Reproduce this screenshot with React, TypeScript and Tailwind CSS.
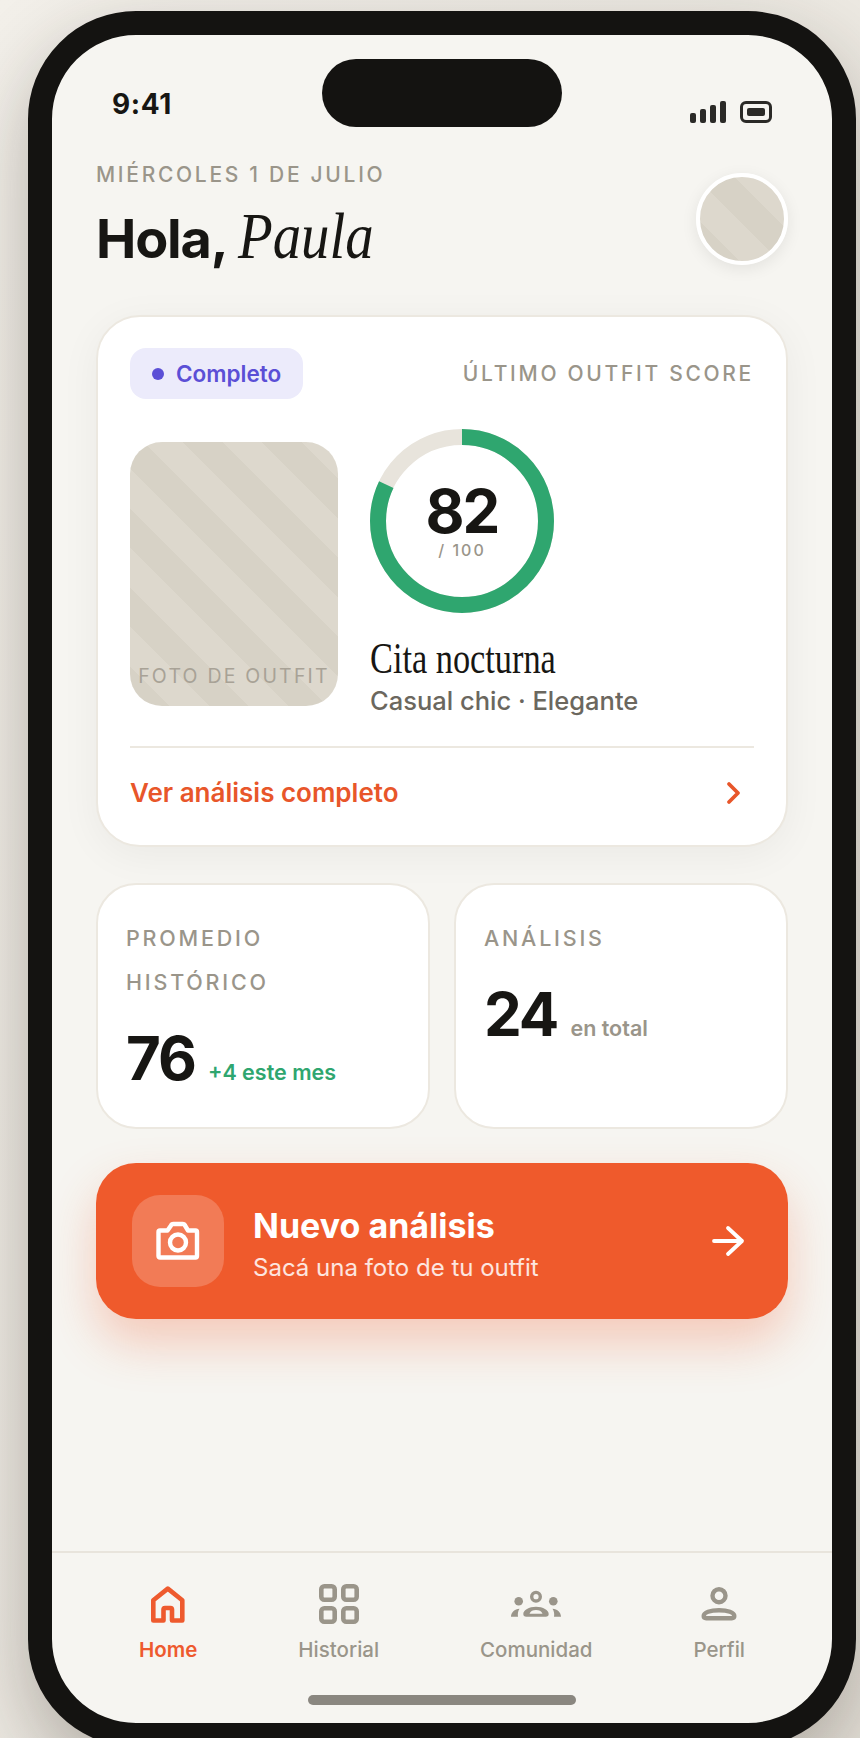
import React from "react";

const sans = "font-['Inter','Noto_Sans',sans-serif]";
const serif = "font-['Liberation_Serif',serif]";
const stripes = "bg-[repeating-linear-gradient(45deg,#d7d2c6,#d7d2c6_28px,#ddd8cd_28px,#ddd8cd_56px)]";

function Stat({ label, value, note, noteColor }: { label: string[]; value: string; note: string; noteColor: string }) {
  return (
    <div className="flex-1 h-[246px] rounded-[40px] border-2 border-[#ece8e0] bg-white pl-[28px] pt-[31px]">
      <div className="text-[21.5px] leading-[44px] tracking-[2.8px] font-medium text-[#9a958a]">
        {label.map((l) => (
          <div key={l}>{l}</div>
        ))}
      </div>
      <div className="mt-[18px] flex items-baseline gap-[13px]">
        <span className="text-[60px] leading-[72px] font-bold tracking-[-2px] text-[#171613]">{value}</span>
        <span className={`text-[21.5px] font-semibold ${noteColor}`}>{note}</span>
      </div>
    </div>
  );
}

function Home() {
  return (
    <svg width="34" height="37" viewBox="0 0 34 37" fill="none" stroke="#ee5a2e" strokeWidth="4.6" strokeLinejoin="round">
      <path d="M2.300 34.500V14.200L16.800 2.600L31.300 14.200V34.500H21V23.500a1.500 1.500 0 0 0-1.500-1.500H14a1.500 1.500 0 0 0-1.500 1.500V34.500Z" />
    </svg>
  );
}
function Grid() {
  return (
    <svg width="40" height="40" viewBox="0 0 40 40" fill="none" stroke="#9a958a" strokeWidth="4.6">
      <rect x="2.300" y="2.300" width="13.400" height="13.400" rx="3" />
      <rect x="24.300" y="2.300" width="13.400" height="13.400" rx="3" />
      <rect x="2.300" y="24.300" width="13.400" height="13.400" rx="3" />
      <rect x="24.300" y="24.300" width="13.400" height="13.400" rx="3" />
    </svg>
  );
}
function Community() {
  return (
    <svg width="52" height="28" viewBox="0 0 52 28" fill="#9a958a">
      <circle cx="26" cy="6.700" r="4.300" fill="none" stroke="#9a958a" strokeWidth="3.400" />
      <circle cx="8.700" cy="11.300" r="4.300" />
      <circle cx="43.300" cy="11.300" r="4.300" />
      <path d="M1 26.700C1 22.500 4.500 19 9.500 18.700C8 21 7.500 24 8 26.700Z" />
      <path d="M51 26.700C51 22.500 47.500 19 42.500 18.700C44 21 44.500 24 44 26.700Z" />
      <path
        fillRule="evenodd"
        d="M13.300 24C13.300 20 19 16.700 26 16.700C33 16.700 38.700 20 38.700 24Q38.700 26.700 35.700 26.700H16.300Q13.300 26.700 13.300 24ZM19.500 23.700H32.500C31.500 21 29 20 26 20C23 20 20.500 21 19.500 23.700Z"
      />
    </svg>
  );
}
function Person() {
  return (
    <svg width="36" height="34" viewBox="0 0 36 34" fill="none" stroke="#9a958a" strokeWidth="4.400">
      <circle cx="18" cy="8.700" r="6.500" />
      <path d="M2.700 29c0-3.500 6.500-5.800 15.300-5.800s15.300 2.300 15.300 5.800c0 1.500-.8 2.200-2.500 2.200H5.200c-1.700 0-2.500-.7-2.500-2.200Z" />
    </svg>
  );
}

function NavItem({ icon, label, active }: { icon: React.ReactNode; label: string; active?: boolean }) {
  return (
    <div className="flex flex-col items-center">
      <div className="h-[46px] mt-[2px] flex items-center justify-center">{icon}</div>
      <span className={`mt-[10px] text-[20.5px] leading-[26px] ${active ? "font-semibold text-[#ee5a2e]" : "font-medium text-[#9a958a]"}`}>{label}</span>
    </div>
  );
}

export default function App() {
  return (
    <div className={`h-[1738px] w-[860px] overflow-hidden bg-gradient-to-br from-[#f3f0ea] to-[#e6e2da] pt-[11px] pl-[28px] ${sans}`}>
      <div className="w-[828px] h-[1736px] rounded-[108px] border-[24px] border-[#141311] bg-[#f6f5f1] shadow-[0_30px_80px_rgba(40,30,20,0.3)] overflow-hidden flex flex-col relative">
        <div className="absolute left-[270px] top-[24px] w-[240px] h-[68px] rounded-full bg-[#141311]" />

        <div className="flex items-start justify-between px-[60px] pt-[51px] h-[108px]">
          <span className="text-[28px] leading-[36px] font-bold tracking-[0.6px] text-[#171613]">9:41</span>
          <div className="flex items-center gap-[14px] mt-[15px]">
            <div className="flex items-end gap-[4px]">
              <span className="w-[6px] h-[10px] rounded-[2px] bg-[#2b2a27]" />
              <span className="w-[6px] h-[14px] rounded-[2px] bg-[#2b2a27]" />
              <span className="w-[6px] h-[18px] rounded-[2px] bg-[#2b2a27]" />
              <span className="w-[6px] h-[22px] rounded-[2px] bg-[#2b2a27]" />
            </div>
            <div className="w-[32px] h-[22px] rounded-[6px] border-[3px] border-[#2b2a27] p-[4px]">
              <div className="h-full rounded-[2px] bg-[#2b2a27]" />
            </div>
          </div>
        </div>

        <div className="flex justify-between px-[44px] pt-[18px]">
          <div>
            <div className="text-[21px] leading-[28px] font-medium tracking-[2.700px] text-[#9a958a]">MIÉRCOLES 1 DE JULIO</div>
            <div className="mt-[14px] flex items-baseline gap-[11px] leading-[66px]">
              <span className="text-[54px] font-bold tracking-[-1.200px] text-[#171613]">Hola,</span>
              <span className={`${serif} italic inline-block origin-left scale-x-[0.86] text-[66px] text-[#171613]`}>Paula</span>
            </div>
          </div>
          <div className={`w-[92px] h-[92px] mt-[12px] rounded-full border-4 border-white shadow-[0_4px_16px_rgba(0,0,0,0.08)] ${stripes}`} />
        </div>

        <div className="mx-[44px] mt-[43px] h-[532px] rounded-[44px] border-2 border-[#ece8e0] bg-white px-[32px] pt-[31px] shadow-[0_8px_40px_rgba(0,0,0,0.05)] shrink-0">
          <div className="flex items-center justify-between">
            <div className="flex items-center gap-[12px] h-[51px] w-[173px] pl-[22px] rounded-[16px] bg-[#ecebfb]">
              <span className="w-[12px] h-[12px] rounded-full bg-[#5b4fd6]" />
              <span className="text-[22.5px] font-semibold text-[#5b4fd6]">Completo</span>
            </div>
            <span className="text-[21px] font-medium tracking-[2.700px] text-[#9a958a]">ÚLTIMO OUTFIT SCORE</span>
          </div>
          <div className="flex gap-[32px] mt-[-8px]">
            <div className={`mt-[51px] relative w-[208px] h-[264px] rounded-[32px] ${stripes}`}>
              <div className="absolute bottom-[15px] inset-x-0 text-center text-[19.5px] tracking-[2.200px] text-[#a8a296] whitespace-nowrap">FOTO DE OUTFIT</div>
            </div>
            <div className="mt-[38px]">
              <div className="relative w-[184px] h-[184px]">
                <svg width="184" height="184" viewBox="0 0 184 184" className="-rotate-90">
                  <circle cx="92" cy="92" r="84" fill="none" stroke="#e8e4dc" strokeWidth="16" />
                  <circle cx="92" cy="92" r="84" fill="none" stroke="#2fa66f" strokeWidth="16" strokeDasharray="432.800 527.800" />
                </svg>
                <div className="absolute inset-0 flex flex-col items-center pt-[55px]">
                  <span className="text-[60px] leading-[55px] font-bold tracking-[-2px] text-[#171613]">82</span>
                  <span className="text-[16px] leading-[22px] tracking-[2px] font-medium text-[#9a958a]">/ 100</span>
                </div>
              </div>
              <div className={`${serif} mt-[22px] origin-left scale-x-[0.78] whitespace-nowrap text-[44px] leading-[48px] text-[#171613]`}>Cita nocturna</div>
              <div className="mt-[1px] text-[25.5px] leading-[34px] font-medium text-[#6b675e] whitespace-nowrap">Casual chic · Elegante</div>
            </div>
          </div>
          <div className="mt-[28px] h-[2px] bg-[#ece8e0]" />
          <div className="flex items-center justify-between mt-[27px]">
            <span className="text-[26px] leading-[36px] font-semibold text-[#e8562a]">Ver análisis completo</span>
            <svg width="18" height="26" viewBox="0 0 18 26" fill="none" stroke="#e8562a" strokeWidth="3.800" strokeLinecap="round" strokeLinejoin="round" className="mr-[12px]">
              <path d="M5 4L14 13L5 22" />
            </svg>
          </div>
        </div>

        <div className="mx-[44px] mt-[36px] flex gap-[24px] shrink-0">
          <Stat label={["PROMEDIO", "HISTÓRICO"]} value="76" note="+4 este mes" noteColor="text-[#2fa66f]" />
          <Stat label={["ANÁLISIS"]} value="24" note="en total" noteColor="text-[#9a958a]" />
        </div>

        <div className="mx-[44px] mt-[34px] h-[156px] shrink-0 rounded-[40px] bg-[#ef5a2c] shadow-[0_24px_48px_rgba(239,90,44,0.28)] flex items-center pl-[36px] pr-[43px]">
          <div className="w-[92px] h-[92px] rounded-[28px] bg-white/20 flex items-center justify-center">
            <svg width="44" height="40" viewBox="0 0 44 40" fill="none" stroke="#fff" strokeWidth="4.400" strokeLinejoin="round">
              <path d="M4 9.500H11.500L15 4.500Q15.500 3 17.500 3H26.500Q28.500 3 29 4.500L32 9.500H39.500Q41 9.500 41 11V35Q41 36.500 39.500 36.500H4Q2.500 36.500 2.500 35V11Q2.500 9.500 4 9.500Z" />
              <circle cx="22" cy="21.500" r="8" />
            </svg>
          </div>
          <div className="ml-[29px] flex-1 mt-[7px]">
            <div className="text-[34px] leading-[42px] font-bold text-white">Nuevo análisis</div>
            <div className="mt-[5px] text-[24px] leading-[32px] text-white/85">Sacá una foto de tu outfit</div>
          </div>
          <svg width="34" height="32" viewBox="0 0 34 32" fill="none" stroke="#fff" strokeWidth="3.800" strokeLinecap="round" strokeLinejoin="round">
            <path d="M3 16H31M17 3L31 16L17 29" />
          </svg>
        </div>

        <div className="flex-1" />

        <div className="h-[172px] shrink-0 border-t-2 border-[#e8e4dc] relative">
          <div className="flex justify-between px-[87px] pt-[26px]">
            <NavItem icon={<Home />} label="Home" active />
            <NavItem icon={<Grid />} label="Historial" />
            <NavItem icon={<Community />} label="Comunidad" />
            <NavItem icon={<Person />} label="Perfil" />
          </div>
          <div className="absolute left-[256px] bottom-[18px] w-[268px] h-[10px] rounded-full bg-[#8a8780]" />
        </div>
      </div>
    </div>
  );
}
